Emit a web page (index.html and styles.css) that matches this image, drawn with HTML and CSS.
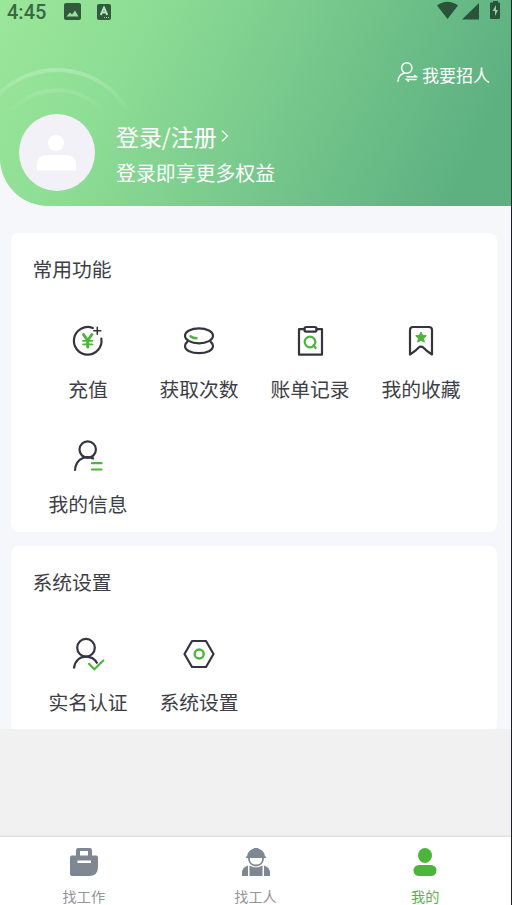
FILE: index.html
```html
<!DOCTYPE html>
<html lang="zh-CN">
<head>
<meta charset="utf-8">
<title>我的</title>
<link rel="stylesheet" href="styles.css">
</head>
<body>
<div class="app">
  <header class="hero">
    <svg class="rings" width="140" height="110" viewBox="0 0 140 110" fill="none" stroke="#fff">
      <defs><linearGradient id="fade" gradientUnits="userSpaceOnUse" x1="0" y1="68" x2="0" y2="112"><stop offset="0" stop-color="#fff" stop-opacity=".24"/><stop offset="1" stop-color="#fff" stop-opacity="0"/></linearGradient></defs>
      <circle cx="57" cy="152" r="82" stroke="url(#fade)" stroke-width="4"/>
      <circle cx="57" cy="152" r="61.500" stroke="url(#fade)" stroke-width="4"/>
    </svg>
    <div class="status">
      <span class="time">4:45</span>
      <svg class="status-pic" width="17" height="17" viewBox="0 0 17 17"><rect width="17" height="17" rx="2" fill="#315b3a"/><path d="M2.500 13.500 6 9.500l2 2 3-4 3.500 6z" fill="#98e1a0"/></svg>
      <svg class="status-a" width="14" height="16" viewBox="0 0 14 16"><rect width="14" height="16" rx="2" fill="#315b3a"/><path d="M3.700 11 7 3.500 10.300 11M5 8.500h4" stroke="#b5e8ba" stroke-width="1.900" fill="none"/><path d="M7 13.500h5" stroke="#98d8a0" stroke-dasharray="1 1"/></svg>
      <svg class="status-right" width="66" height="20" viewBox="0 0 66 20" fill="#29543a"><path d="M0 5.500Q10.500-2 21 5.500L10.500 19zM25 19.500 42 3v16.500zM53 3.500q0-1 1-1h2V1h5v1.500h1q1 0 1 1V18q0 1-1 1h-8q-1 0-1-1z"/><path d="m59 5-3.500 6H58v5l3-6h-2z" fill="#9bc9a8"/></svg>
    </div>
    <div class="recruit">
      <svg width="21" height="21" viewBox="0 0 21 21" fill="none" stroke="#fff" stroke-width="1.400" stroke-linecap="round"><circle cx="9.800" cy="6" r="5.200"/><path d="M1 19.200Q1.500 12.500 7.500 11M10 14.800h9.500l-2-1.500M19 17.500H9.500l2 1.700"/></svg>
      <span>我要招人</span>
    </div>
    <div class="profile">
      <div class="avatar"><svg width="40" height="36" viewBox="0 0 40 36" fill="#fff"><circle cx="19" cy="8" r="8"/><path d="M0 35.500V30q0-10 10-10h19q10 0 10 10v5.500z"/></svg></div>
      <div class="login">
        <div class="login-title"><span>登录/注册</span><svg width="8" height="12" viewBox="0 0 8 12" fill="none" stroke="#fff" stroke-opacity=".85" stroke-width="1.300"><path d="m1 .8 5.500 5.200L1 11.200"/></svg></div>
        <div class="login-sub">登录即享更多权益</div>
      </div>
    </div>
  </header>

  <main class="content">
    <section class="card card-common">
      <h2>常用功能</h2>
      <div class="grid">
        <div class="item"><svg width="32" height="32" viewBox="0 0 32 32" fill="none" stroke="#35353f" stroke-width="2.200" stroke-linecap="round"><path d="M20.800 3A13.800 13.800 0 1 0 29.300 13.500"/><path d="M25.300 2.300v7M21.800 5.800h7" stroke-width="1.600"/><path d="m11.500 9.500 4.200 6 4.200-6M15.700 16v6" stroke="#4eb53c" stroke-width="3"/><path d="M11 15.800h9.500M11 19.300h9.500" stroke="#4eb53c" stroke-width="1.700"/></svg><span>充值</span></div>
        <div class="item"><svg width="32" height="32" viewBox="0 0 32 32" fill="none" stroke="#35353f" stroke-width="2.200" stroke-linecap="round"><ellipse cx="16" cy="10.800" rx="14" ry="7.500"/><path d="M4.200 17C2.800 18 2 19.500 2 21c0 4.300 6.300 7.200 14 7.200S30 25.300 30 21c0-1.500-.8-3-2.200-4"/><path d="M7.500 11.200q2.500 2 6 2.100" stroke="#4eb53c" stroke-width="2.400"/></svg><span>获取次数</span></div>
        <div class="item"><svg width="32" height="32" viewBox="0 0 32 32" fill="none" stroke="#35353f" stroke-width="2.200" stroke-linecap="round" stroke-linejoin="round"><path d="M10.500 4.200H5v25.500h23V4.200h-5.500"/><rect x="10.500" y="2" width="12" height="4.600" rx="1.500"/><circle cx="16" cy="17" r="5.300" stroke="#4eb53c"/><path d="m19.500 20.500 2.200 2.500" stroke="#4eb53c"/></svg><span>账单记录</span></div>
        <div class="item"><svg width="32" height="32" viewBox="0 0 32 32" fill="none" stroke="#35353f" stroke-width="2.200" stroke-linejoin="round"><path d="M5 29.500V5q0-3 3-3h16q3 0 3 3v24.500q-5.500-3.500-8.500-6.800-2.500-2-5 0Q10.500 26 5 29.500z"/><path d="m16 7 1.600 3.300 3.700.5-2.700 2.600.7 3.700L16 15.300l-3.300 1.800.7-3.700-2.700-2.600 3.700-.5z" fill="#4eb53c" stroke="#4eb53c" stroke-width="1"/></svg><span>我的收藏</span></div>
        <div class="item"><svg width="32" height="32" viewBox="0 0 32 32" fill="none" stroke="#35353f" stroke-width="2.200"><circle cx="15.700" cy="9.600" r="8.200"/><path d="M3 30.800Q3.300 21 11 18q5.500-2 11 .8"/><path d="M20 23.200h9.500M20 29.500h9.500" stroke="#4eb53c" stroke-linecap="round"/></svg><span>我的信息</span></div>
      </div>
    </section>
    <section class="card card-system">
      <h2>系统设置</h2>
      <div class="grid">
        <div class="item"><svg width="32" height="32" viewBox="0 0 32 32" fill="none" stroke="#35353f" stroke-width="2.200"><circle cx="14" cy="9.700" r="8.800"/><path d="M2 30.500C2.700 23 7.500 18.700 14 18.700c5 0 9 2.600 11.300 6.800"/><path d="m17 25.800 5.300 5.500 9-8.800" stroke="#4eb53c" stroke-linecap="round"/></svg><span>实名认证</span></div>
        <div class="item"><svg width="32" height="32" viewBox="0 0 32 32" fill="none" stroke="#35353f" stroke-width="2.200" stroke-linejoin="round"><path d="M9 3h14l7.500 13L23 29H9L1.500 16z"/><circle cx="16.200" cy="16" r="4.500" stroke="#4eb53c" stroke-width="2.400"/></svg><span>系统设置</span></div>
      </div>
    </section>
  </main>

  <nav class="tabs">
    <div class="tab"><svg width="30" height="30" viewBox="0 0 30 30"><path d="M7 8.500V3q0-2 2-2h12q2 0 2 2v5.500h4q2 0 2 2V20q0 9-9 9H3q-2 0-2-2V10.500q0-2 2-2z" fill="#7f8792"/><path d="M11 4h8v4.500h-8zM8.500 13.500h13.500V16H8.500z" fill="#fff"/></svg><span>找工作</span></div>
    <div class="tab"><svg width="30" height="30" viewBox="0 0 30 30" fill="#7f8792"><path d="M5 9.500h1Q7 3 12.500 1.800L13 1h4l.5.800Q23 3 24 9.500h1V11H5z"/><path d="M7.800 10.500c0 5 3 8 7.200 8s7.200-3 7.200-8" fill="none" stroke="#7f8792" stroke-width="1.800"/><path d="M8.500 18.500q6.500 4 13 0V29h-13zM7 18.500V29H1v-3.500q0-5 6-7zM23 18.500V29h6v-3.500q0-5-6-7z"/></svg><span>找工人</span></div>
    <div class="tab active"><svg width="30" height="30" viewBox="0 0 30 30" fill="#4eb53c"><ellipse cx="15" cy="8.500" rx="7" ry="7.600"/><rect x="3.500" y="18" width="23" height="11" rx="5.500"/></svg><span>我的</span></div>
  </nav>
</div>
</body>
</html>
```

FILE: styles.css
```css
* { box-sizing: border-box; }
body {
  margin: 0;
  background: #f1f1f1;
  font-family: "Noto Sans CJK SC", sans-serif;
  color: #3e3e46;
}
.app {
  width: 512px;
  height: 905px;
  display: flex;
  flex-direction: column;
  border-right: 1px solid #1b2230;
  overflow: hidden;
}
.hero {
  position: relative;
  z-index: 0;
  height: 206px;
  flex: none;
  background: linear-gradient(115deg, #9be79a 0%, #8ddd95 25%, #75c68b 58%, #5db181 90%);
  border-radius: 0 0 0 48px;
  box-shadow: -48px 0 0 #f6f7fa;
}
.rings { position: absolute; left: 0; top: 0; z-index: -1; }
.status { display: flex; height: 24px; align-items: flex-start; }
.time {
  width: 40px;
  margin-left: 7px;
  font: 500 20px/24px Roboto, sans-serif;
  color: #3a6943;
}
.status-pic { margin: 3px 0 0 17px; }
.status-a { margin: 4px 0 0 16px; }
.status-right { margin: 0 8px 0 auto; }
.recruit {
  display: flex;
  justify-content: flex-end;
  height: 22px;
  margin: 38px 21px 0 0;
  gap: 4px;
  font-size: 17px;
  line-height: 25px;
  color: #fff;
}
.profile { display: flex; margin: 30px 0 0 19px; }
.avatar {
  width: 76px;
  height: 77px;
  border-radius: 50%;
  background: #f1f1f7;
  display: flex;
  justify-content: center;
  padding-top: 21px;
}
.login { margin-left: 21px; padding-top: 5px; color: #fff; }
.login-title {
  display: flex;
  align-items: center;
  gap: 4px;
  height: 34px;
  font-size: 22.9px;
}
.login-sub { font-size: 19.9px; line-height: 40px; }
.content { flex: none; height: 523px; background: #f6f7fa; padding: 27px 14px 0 11px; }
.card { background: #fff; border-radius: 8px; padding: 21px 21px 0; }
.card-common { height: 299px; }
.card-system { height: 183px; margin-top: 14px; border-radius: 8px 8px 4px 4px; }
h2 { margin: 0 0 41px .5px; font-size: 19.8px; font-weight: 400; line-height: 30px; }
.grid { display: grid; grid-template-columns: repeat(4, 111px); row-gap: 35px; }
.item {
  height: 80px;
  display: flex;
  flex-direction: column;
  align-items: center;
  padding-left: 1px;
  font-size: 19.8px;
}
.item svg { flex: none; overflow: visible; }
.item span { line-height: 30px; margin-top: 17px; }
.tabs {
  display: flex;
  height: 68px;
  margin-top: auto;
  background: #fff;
  box-shadow: 0 -1px 2px #d9d9d9;
}
.tab {
  flex: 1;
  display: flex;
  flex-direction: column;
  align-items: center;
  padding: 10px 2px 0 0;
  font-size: 14.2px;
  color: #92959a;
}
.tab:nth-child(1) { padding-right: 4px; }
.tab svg { flex: none; }
.tab span { flex: none; line-height: 18px; margin-top: 10px; }
.tab.active { color: #58b548; }
```
